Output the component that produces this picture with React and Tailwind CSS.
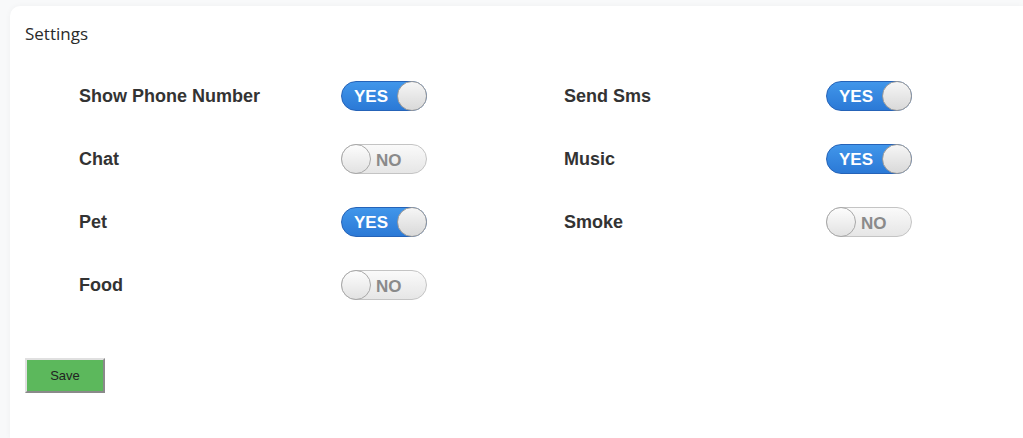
import { useState } from 'react'

const items = [
  { label: 'Show Phone Number', on: true },
  { label: 'Send Sms', on: true },
  { label: 'Chat', on: false },
  { label: 'Music', on: true },
  { label: 'Pet', on: true },
  { label: 'Smoke', on: false },
  { label: 'Food', on: false },
]

function Toggle({ on, onClick }) {
  const knob = on
    ? 'h-[30px] w-[30px] -m-px shrink-0 rounded-full border border-[#9a9a9a] bg-gradient-to-b from-[#f6f6f6] to-[#d9d9d9]'
    : 'h-[30px] w-[30px] -m-px shrink-0 rounded-full border border-[#a8a8a8] bg-gradient-to-b from-[#fdfdfd] to-[#e2e2e2]'

  return (
    <button
      onClick={onClick}
      className={
        'h-[30px] w-[86px] rounded-full border flex items-center font-["Liberation_Sans",Arial,sans-serif] text-[17px] font-bold leading-none ' +
        (on
          ? 'border-[#2563b8] bg-gradient-to-b from-[#4196ea] to-[#2b79d6] text-white'
          : 'border-[#c4c4c4] bg-gradient-to-b from-[#fafafa] to-[#e6e6e6] text-[#8a8a8a]')
      }
    >
      {on ? (
        <>
          <span className="flex-1 text-center pl-[2px]">YES</span>
          <span className={knob} />
        </>
      ) : (
        <>
          <span className={knob} />
          <span className="flex-1 text-left pl-[6px] pt-[2px]">NO</span>
        </>
      )}
    </button>
  )
}

export default function App() {
  const [state, setState] = useState(items.map((i) => i.on))

  return (
    <div className="min-h-[438px] bg-[#f8f9fa] pl-[10px] pt-[6px]">
      <div className="min-h-[432px] rounded-tl-[10px] bg-white shadow-[0_0_6px_rgba(0,0,0,0.04)] pl-[15px] pt-[17px]">
        <h2 className="text-[17px] leading-[22px] text-[#2a2a2a] font-['Open_Sans',sans-serif]">Settings</h2>

        <div className="mt-[36px] ml-[54px] grid grid-cols-[485px_485px] gap-y-[33px]">
          {items.map((item, i) => (
            <div key={item.label} className="flex items-center h-[30px]">
              <span className="w-[262px] text-[18px] font-bold text-[#333] font-['Liberation_Sans',Arial,sans-serif]">
                {item.label}
              </span>
              <Toggle
                on={state[i]}
                onClick={() => setState(state.map((s, j) => (j === i ? !s : s)))}
              />
            </div>
          ))}
        </div>

        <button className="mt-[58px] h-[35px] w-[80px] bg-[#5cb85c] border-2 border-t-[#e0e0e0] border-l-[#e0e0e0] border-b-[#8a8a8a] border-r-[#8a8a8a] text-[13px] text-[#222] font-['Liberation_Sans',Arial,sans-serif]">
          Save
        </button>
      </div>
    </div>
  )
}
